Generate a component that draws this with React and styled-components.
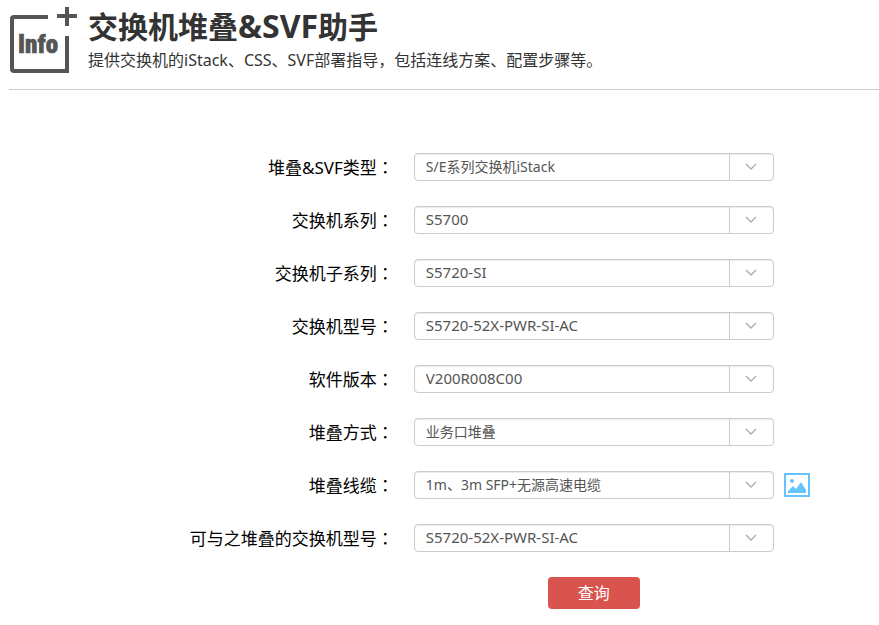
import React, { useState } from "react";
import styled, { createGlobalStyle } from "styled-components";

const GlobalStyle = createGlobalStyle`
  body {
    margin: 0;
    background: #fff;
    color: #000;
    font-family: "Noto Sans", "Noto Sans CJK SC", sans-serif;
  }

  * {
    box-sizing: border-box;
  }
`;

const Page = styled.div`
  padding-left: 9px;
`;

const Header = styled.header`
  display: flex;
  gap: 9px;
  height: 90px;
  padding-top: 6px;
  border-bottom: 1px solid #ccc;
`;

const Logo = styled.svg`
  flex: none;
  width: 70px;
  height: 70px;
`;

const LogoText = styled.text`
  font-family: "Roboto Condensed", "Open Sans Condensed", Roboto, sans-serif;
  font-size: 25px;
  font-weight: 900;
  fill: #555;
  stroke: #555;
  stroke-width: 0.6px;
`;

const Title = styled.h1`
  margin: 0;
  color: #333;
  font-size: 30px;
  font-weight: bold;
  line-height: 42px;
`;

// 英文部分字号略大
const TitleLatin = styled.span`
  font-size: 32px;
  line-height: 1;
`;

const Intro = styled.p`
  margin: 0;
  color: #333;
  font-size: 16px;
  line-height: 24px;
`;

const Form = styled.form`
  display: flex;
  flex-direction: column;
  gap: 25px;
  padding: 63px 0 16px;
`;

const Row = styled.div`
  display: grid;
  grid-template-columns: calc(44% + 2px) 360px auto;
  grid-template-rows: 28px;
  column-gap: 20px;
  align-items: center;
  justify-content: start;
`;

const Label = styled.label`
  padding-top: 2px;
  font-size: 17px;
  line-height: 28px;
  text-align: right;
`;

// 全角冒号居中显示
const Colon = styled.span`
  font-family: "Noto Sans CJK TC", sans-serif;
  line-height: 1;
`;

const SelectBox = styled.div`
  display: grid;
  height: 28px;
`;

const Select = styled.select`
  grid-area: 1 / 1;
  width: 100%;
  height: 28px;
  margin: 0;
  padding: 0 55px 2px 11px;
  border: 1px solid #ccc;
  border-radius: 4px;
  outline: none;
  color: #555;
  background: #fff;
  box-shadow: inset 0 1px 1px rgba(0, 0, 0, 0.08);
  font-family: inherit;
  font-size: ${(props) => (props.$latin ? "15px" : "14px")};
  appearance: none;

  &:focus-visible {
    border-color: #66afe9;
  }
`;

const Arrow = styled.span`
  grid-area: 1 / 1;
  justify-self: end;
  display: flex;
  align-items: center;
  justify-content: center;
  width: 45px;
  height: 28px;
  padding-right: 2px;
  border-left: 1px solid #ccc;
  pointer-events: none;
`;

const PictureButton = styled.button`
  display: flex;
  justify-self: start;
  margin-left: -10px;
  padding: 0;
  border: 0;
  background: none;
  cursor: pointer;
`;

const Actions = styled(Row)`
  grid-template-rows: 32px;
`;

const Submit = styled.button`
  grid-column: 2;
  justify-self: center;
  width: 92px;
  height: 32px;
  padding: 0 0 2px;
  border: 0;
  border-radius: 4px;
  color: #fff;
  background: #d9534f;
  font-family: inherit;
  font-size: 16px;
  cursor: pointer;

  &:hover {
    background: #c9302c;
  }
`;

const FIELDS = [
  { name: "type", label: "堆叠&SVF类型", options: ["S/E系列交换机iStack"] },
  { name: "series", label: "交换机系列", options: ["S5700"] },
  { name: "subSeries", label: "交换机子系列", options: ["S5720-SI"] },
  { name: "model", label: "交换机型号", options: ["S5720-52X-PWR-SI-AC"] },
  { name: "version", label: "软件版本", options: ["V200R008C00"] },
  { name: "mode", label: "堆叠方式", options: ["业务口堆叠"] },
  {
    name: "cable",
    label: "堆叠线缆",
    options: ["1m、3m SFP+无源高速电缆"],
    picture: true,
  },
  {
    name: "peerModel",
    label: "可与之堆叠的交换机型号",
    options: ["S5720-52X-PWR-SI-AC"],
  },
];

const InfoLogo = () => (
  <Logo viewBox="0 0 70 70" aria-hidden="true">
    <path
      d="M39 11H5Q3 11 3 13V63Q3 65 5 65H58V30"
      fill="none"
      stroke="#555"
      strokeWidth="4"
    />
    <path d="M58 1V20M48 10H68" fill="none" stroke="#555" strokeWidth="4" />
    <LogoText x="9" y="47">
      Info
    </LogoText>
  </Logo>
);

const PictureIcon = () => (
  <svg width="26" height="24" viewBox="0 0 26 24" aria-hidden="true">
    <rect
      x="1"
      y="1"
      width="24"
      height="22"
      fill="none"
      stroke="#66c3ff"
      strokeWidth="2"
    />
    <circle cx="8" cy="8" r="2" fill="#66c3ff" />
    <path d="M4 20V18L9 13L12 16L17 9L22 17V20Z" fill="#66c3ff" />
  </svg>
);

const Field = ({ field, value, onChange }) => (
  <Row>
    <Label htmlFor={field.name}>
      {field.label}
      <Colon lang="zh-TW">：</Colon>
    </Label>
    <SelectBox>
      <Select
        id={field.name}
        name={field.name}
        value={value}
        onChange={onChange}
        $latin={/^[\w-]+$/.test(value)}
      >
        {field.options.map((option) => (
          <option key={option} value={option}>
            {option}
          </option>
        ))}
      </Select>
      <Arrow>
        <svg width="12" height="8" viewBox="0 0 12 8" aria-hidden="true">
          <path
            d="M1 1L6 6L11 1"
            fill="none"
            stroke="#aaa"
            strokeWidth="1.3"
          />
        </svg>
      </Arrow>
    </SelectBox>
    {field.picture && (
      <PictureButton type="button" aria-label={field.label}>
        <PictureIcon />
      </PictureButton>
    )}
  </Row>
);

const App = () => {
  const [values, setValues] = useState(
    Object.fromEntries(FIELDS.map((f) => [f.name, f.options[0]]))
  );

  const handleChange = (e) => {
    setValues({ ...values, [e.target.name]: e.target.value });
  };

  const handleSubmit = (e) => {
    e.preventDefault();
    // console.log(values);
  };

  return (
    <>
      <GlobalStyle />
      <Page lang="zh-CN">
        <Header>
          <InfoLogo />
          <div>
            <Title>
              交换机堆叠<TitleLatin>&SVF</TitleLatin>助手
            </Title>
            <Intro>
              提供交换机的iStack、CSS、SVF部署指导，包括连线方案、配置步骤等。
            </Intro>
          </div>
        </Header>
        <Form onSubmit={handleSubmit}>
          {FIELDS.map((field) => (
            <Field
              key={field.name}
              field={field}
              value={values[field.name]}
              onChange={handleChange}
            />
          ))}
          <Actions>
            <Submit type="submit">查询</Submit>
          </Actions>
        </Form>
      </Page>
    </>
  );
};

export default App;
